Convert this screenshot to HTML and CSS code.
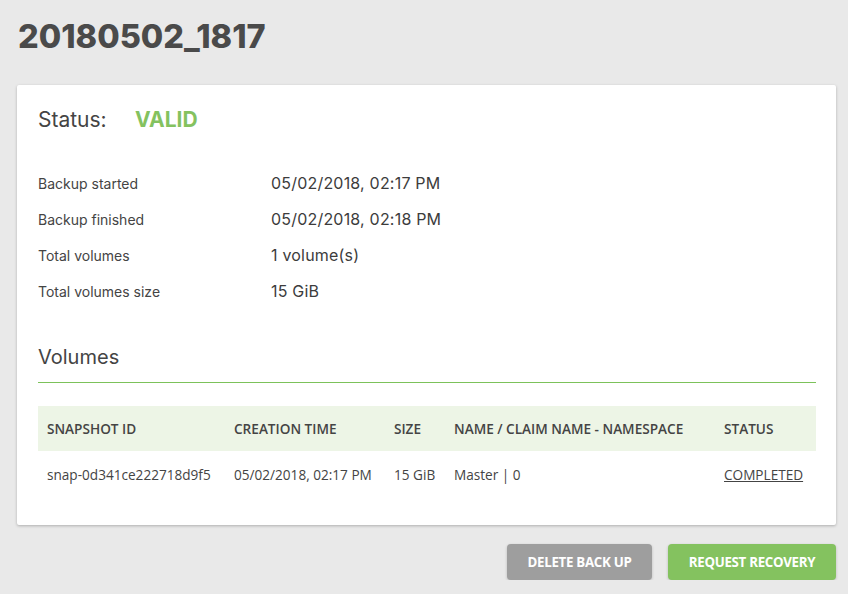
FILE: index.html
```html
<!DOCTYPE html>
<html lang="en">
<head>
  <meta charset="UTF-8" />
  <meta name="viewport" content="width=device-width, initial-scale=1.0"/>
  <title>20180502_1817 | Backup</title>
  <link rel="stylesheet" href="styles.css">
</head>
<body>

  <h1 class="page-title">20180502_1817</h1>

  <div class="card">
    <div class="status">
      <span class="status-label">Status:</span>
      <span class="status-value">VALID</span>
    </div>

    <div class="details">
      <div class="detail-row">
        <span class="detail-label">Backup started</span>
        <span class="detail-value">05/02/2018, 02:17 PM</span>
      </div>
      <div class="detail-row">
        <span class="detail-label">Backup finished</span>
        <span class="detail-value">05/02/2018, 02:18 PM</span>
      </div>
      <div class="detail-row">
        <span class="detail-label">Total volumes</span>
        <span class="detail-value">1 volume(s)</span>
      </div>
      <div class="detail-row">
        <span class="detail-label">Total volumes size</span>
        <span class="detail-value">15 GiB</span>
      </div>
    </div>

    <h2 class="section-title">Volumes</h2>

    <table class="volumes">
      <thead>
        <tr>
          <th class="col-id">Snapshot ID</th>
          <th class="col-time">Creation time</th>
          <th class="col-size">Size</th>
          <th class="col-name">Name / Claim name - Namespace</th>
          <th class="col-status">Status</th>
        </tr>
      </thead>
      <tbody>
        <tr>
          <td>snap-0d341ce222718d9f5</td>
          <td>05/02/2018, 02:17 PM</td>
          <td>15 GiB</td>
          <td>Master | 0</td>
          <td><a href="#" class="status-link">COMPLETED</a></td>
        </tr>
      </tbody>
    </table>
  </div>

  <div class="actions">
    <button class="btn btn-grey" type="button">Delete back up</button>
    <button class="btn btn-green" type="button">Request recovery</button>
  </div>

</body>
</html>
```

FILE: styles.css
```css
body {
  margin: 0;
  padding: 0 12px 0 17px;
  font-family: 'Inter', 'Noto Sans', sans-serif;
  background-color: #e9e9e9;
  color: #444;
}

.page-title {
  margin: 0;
  padding: 16px 0 0 1px;
  height: 85px;
  box-sizing: border-box;
  font-size: 32.5px;
  line-height: 42px;
  font-weight: 800;
  color: #4a4a4a;
}

.card {
  background: #fff;
  padding: 21px 20px 28px 21px;
  border-radius: 2px;
  box-shadow: 0 1px 3px rgba(0,0,0,0.25);
}

.status {
  display: flex;
  align-items: center;
  height: 26px;
  font-size: 21px;
}

.status-label {
  width: 97px;
  color: #444;
}

.status-value {
  font-weight: 700;
  color: #84c25f;
}

.details {
  margin-top: 33px;
}

.detail-row {
  display: flex;
  align-items: center;
  height: 36px;
}

.detail-label {
  width: 233px;
  font-size: 14px;
  color: #444;
}

.detail-value {
  font-size: 16px;
  letter-spacing: 0.2px;
  color: #3c3c3c;
}

.section-title {
  margin: 36px 0 0;
  padding-bottom: 13px;
  font-size: 20px;
  font-weight: 400;
  color: #444;
  border-bottom: 1px solid #7cc25a;
}

.volumes {
  width: 100%;
  margin-top: 23px;
  border-collapse: collapse;
  font-family: 'Open Sans', sans-serif;
  font-size: 13.6px;
  color: #444;
}

.volumes th {
  height: 45px;
  padding: 0 0 0 9px;
  background: #edf5e6;
  text-align: left;
  font-weight: 600;
  text-transform: uppercase;
}

.volumes td {
  height: 46px;
  padding: 0 0 0 9px;
}

.col-id { width: 178px; }
.col-time { width: 151px; }
.col-size { width: 51px; }
.col-name { width: 261px; }

.status-link {
  color: #444;
  text-decoration: underline;
}

.actions {
  display: flex;
  justify-content: flex-end;
  gap: 16px;
  margin-top: 19px;
}

.btn {
  height: 36px;
  padding: 0;
  border: none;
  border-radius: 4px;
  font-family: 'Open Sans', sans-serif;
  font-size: 13.3px;
  font-weight: 700;
  letter-spacing: -0.3px;
  text-transform: uppercase;
  color: #fff;
  cursor: pointer;
  box-shadow: 0 1px 3px rgba(0,0,0,0.2);
}

.btn-grey {
  width: 145px;
  background-color: #9e9e9e;
}

.btn-green {
  width: 168px;
  background-color: #84c25f;
}
```
